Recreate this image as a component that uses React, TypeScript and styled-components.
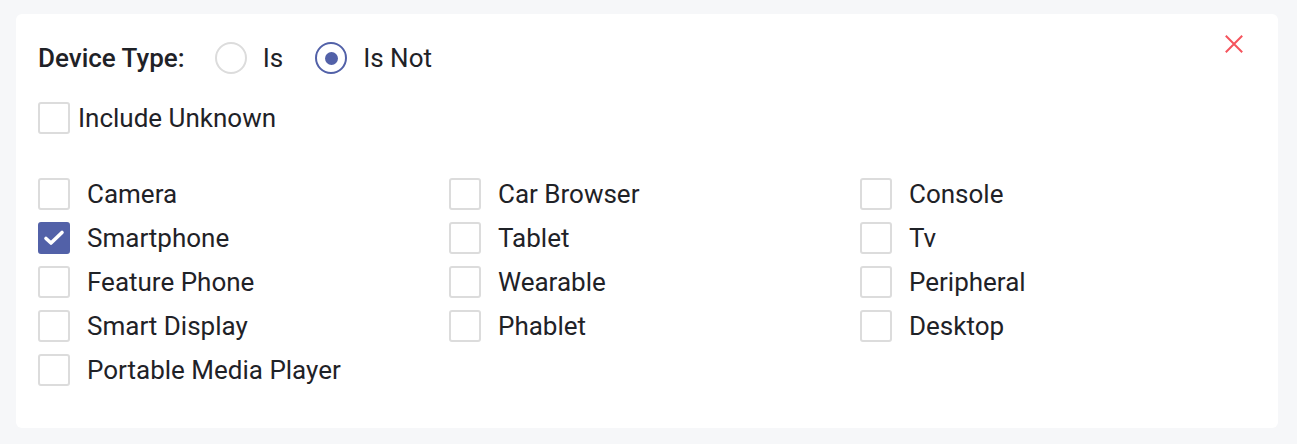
import React, { useState } from "react";
import styled, { createGlobalStyle } from "styled-components";

const Global = createGlobalStyle`
  html, body { margin: 0; padding: 0; background: #f6f7f9; }
  body { font-family: Roboto, "Liberation Sans", sans-serif; color: #1f2227; }
`;

const Page = styled.div`
  padding: 14px 19px 16px 16px;
`;

const Card = styled.div`
  position: relative;
  background: #fff;
  border-radius: 6px;
  padding: 28px 22px 42px 22px;
  min-height: 414px;
  box-sizing: border-box;
`;

const CloseButton = styled.button`
  position: absolute;
  top: 21px;
  right: 35px;
  width: 18px;
  height: 18px;
  padding: 0;
  border: 0;
  background: none;
  cursor: pointer;
  display: flex;
`;

const TypeRow = styled.div`
  display: flex;
  align-items: center;
  height: 32px;
`;

const TypeLabel = styled.span`
  font-size: 26px;
  font-weight: 500;
  margin-right: 30px;
`;

const RadioOption = styled.label`
  display: flex;
  align-items: center;
  gap: 16px;
  margin-right: 32px;
  font-size: 26px;
  cursor: pointer;
`;

const RadioCircle = styled.span<{ $on: boolean }>`
  width: 32px;
  height: 32px;
  box-sizing: border-box;
  border-radius: 50%;
  border: 2px solid ${(p) => (p.$on ? "#5261a8" : "#dcdcdc")};
  display: flex;
  align-items: center;
  justify-content: center;
  &::after {
    content: "";
    width: 13px;
    height: 13px;
    border-radius: 50%;
    background: ${(p) => (p.$on ? "#5261a8" : "transparent")};
  }
`;

const UnknownRow = styled.label`
  display: flex;
  align-items: center;
  gap: 8px;
  margin-top: 28px;
  height: 32px;
  font-size: 26px;
  cursor: pointer;
`;

const Grid = styled.div`
  display: grid;
  grid-template-columns: repeat(3, 411px);
  row-gap: 12px;
  margin-top: 44px;
`;

const Option = styled.label`
  display: flex;
  align-items: center;
  gap: 17px;
  height: 32px;
  font-size: 26px;
  cursor: pointer;
`;

const Box = styled.span<{ $on: boolean }>`
  width: 32px;
  height: 32px;
  flex: none;
  box-sizing: border-box;
  border-radius: 3px;
  border: 2px solid ${(p) => (p.$on ? "#5261a8" : "#dcdcdc")};
  background: ${(p) => (p.$on ? "#5261a8" : "#fff")};
  display: flex;
  align-items: center;
  justify-content: center;
`;

const Check = () => (
  <svg width="28" height="28" viewBox="2 2 28 28">
    <path d="M8 16.5 L13 21 L24 10.5" fill="none" stroke="#fff" strokeWidth="3.6" strokeLinecap="round" strokeLinejoin="round" />
  </svg>
);

const devices = [
  "Camera", "Car Browser", "Console",
  "Smartphone", "Tablet", "Tv",
  "Feature Phone", "Wearable", "Peripheral",
  "Smart Display", "Phablet", "Desktop",
  "Portable Media Player",
];

export default function App() {
  const [mode, setMode] = useState<"is" | "not">("not");
  const [unknown, setUnknown] = useState(false);
  const [picked, setPicked] = useState<string[]>(["Smartphone"]);

  const toggle = (d: string) =>
    setPicked((p) => (p.includes(d) ? p.filter((x) => x !== d) : [...p, d]));

  return (
    <Page>
      <Global />
      <Card>
        <CloseButton aria-label="Close">
          <svg width="18" height="18" viewBox="0 0 18 18">
            <path d="M0.8 0.8 L17.2 17.2 M17.2 0.8 L0.8 17.2" stroke="#f5545d" strokeWidth="2" />
          </svg>
        </CloseButton>
        <TypeRow>
          <TypeLabel>Device Type:</TypeLabel>
          <RadioOption onClick={() => setMode("is")}>
            <RadioCircle $on={mode === "is"} />
            Is
          </RadioOption>
          <RadioOption onClick={() => setMode("not")}>
            <RadioCircle $on={mode === "not"} />
            Is Not
          </RadioOption>
        </TypeRow>
        <UnknownRow onClick={() => setUnknown(!unknown)}>
          <Box $on={unknown}>{unknown && <Check />}</Box>
          Include Unknown
        </UnknownRow>
        <Grid>
          {devices.map((d) => (
            <Option key={d} onClick={() => toggle(d)}>
              <Box $on={picked.includes(d)}>{picked.includes(d) && <Check />}</Box>
              {d}
            </Option>
          ))}
        </Grid>
      </Card>
    </Page>
  );
}
